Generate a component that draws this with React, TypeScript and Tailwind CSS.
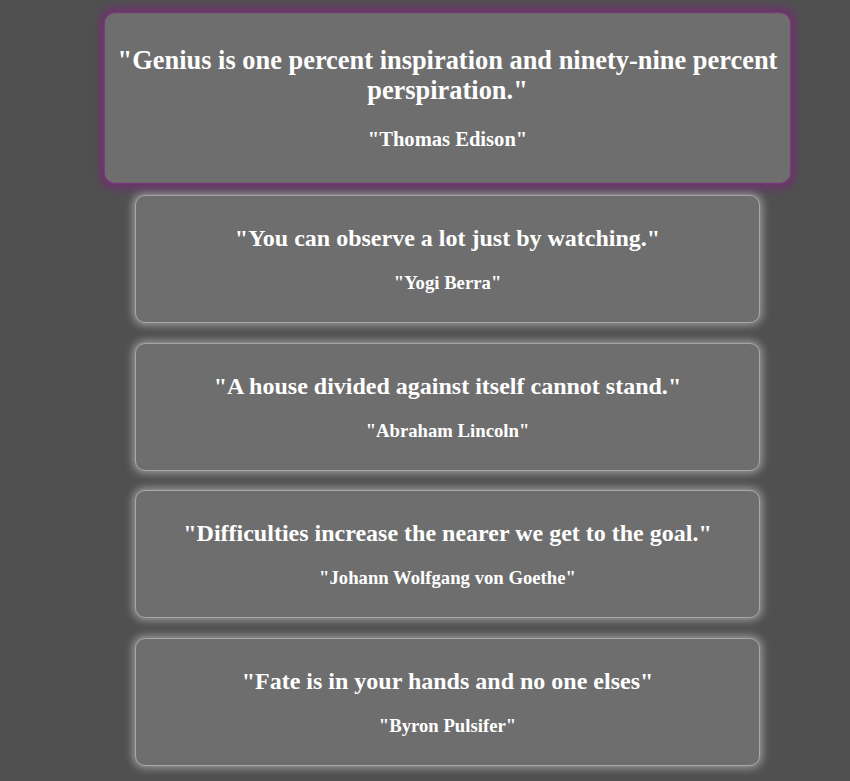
import React from "react";

const quotes = [
  { text: "Genius is one percent inspiration and ninety-nine percent perspiration.", author: "Thomas Edison" },
  { text: "You can observe a lot just by watching.", author: "Yogi Berra" },
  { text: "A house divided against itself cannot stand.", author: "Abraham Lincoln" },
  { text: "Difficulties increase the nearer we get to the goal.", author: "Johann Wolfgang von Goethe" },
  { text: "Fate is in your hands and no one elses", author: "Byron Pulsifer" },
];

const QuoteCard = ({ text, author, active }: { text: string; author: string; active?: boolean }) => {
  return (
    <div
      className={
        active
          ? "w-[625px] p-[10px] rounded-[10px] border border-[#7b3a7b] bg-[#6e6e6e] text-center text-white scale-110 shadow-[0_0_8px_3px_rgba(120,40,120,0.8)]"
          : "w-[625px] px-[10px] pt-[9px] pb-[10px] rounded-[10px] border border-[#a8a8a8] bg-[#6e6e6e] text-center text-white shadow-[0_0_8px_2px_rgba(255,255,255,0.45)]"
      }
    >
      <h2 className="text-[24px] leading-[27px] font-bold mt-5 mb-5">"{text}"</h2>
      <h3 className="text-[18.72px] leading-[21px] font-bold mb-[19px]">"{author}"</h3>
    </div>
  );
};

export default function App() {
  return (
    <div className="min-h-[781px] bg-[#505050] pt-[20px] pb-[20px] font-['Liberation_Serif',serif]">
      <div className="ml-[135px] flex flex-col gap-[19.4px]">
        {quotes.map((q, i) => (
          <QuoteCard key={i} text={q.text} author={q.author} active={i === 0} />
        ))}
      </div>
    </div>
  );
}
